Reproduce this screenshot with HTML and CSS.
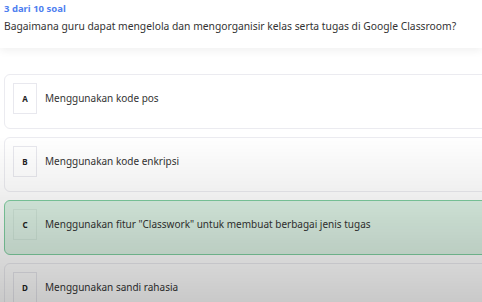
FILE: index.html
```html
<!DOCTYPE html>
<html lang="id">
<head>
  <meta charset="UTF-8">
  <title>Kuis Google Classroom</title>
  <link rel="stylesheet" href="styles.css">
</head>
<body>
  <!-- Question header -->
  <div class="quiz-head">
    <div class="counter">3 dari 10 soal</div>
    <div class="question">Bagaimana guru dapat mengelola dan mengorganisir kelas serta tugas di Google Classroom?</div>
  </div>

  <!-- Answer options -->
  <div class="options">
    <div class="option">
      <span class="letter">A</span>
      <span class="label">Menggunakan kode pos</span>
    </div>
    <div class="option">
      <span class="letter">B</span>
      <span class="label">Menggunakan kode enkripsi</span>
    </div>
    <div class="option selected">
      <span class="letter">C</span>
      <span class="label">Menggunakan fitur "Classwork" untuk membuat berbagai jenis tugas</span>
    </div>
    <div class="option">
      <span class="letter">D</span>
      <span class="label">Menggunakan sandi rahasia</span>
    </div>
  </div>

  <!-- video fade at the bottom -->
  <div class="shade"></div>
</body>
</html>
```

FILE: styles.css
```css
* {
  margin: 0;
  padding: 0;
  box-sizing: border-box;
}

html, body {
  height: 100%;
  overflow: hidden;
}

body {
  display: flex;
  flex-direction: column;
  background: #fff;
  font-family: 'Noto Sans', sans-serif;
  color: #333;
}

/* Header */
.quiz-head {
  height: 48px;
  flex-shrink: 0;
  padding: 2px 4px 0;
  background: #fff;
  box-shadow: 0 3px 8px rgba(0, 0, 0, 0.06);
  position: relative;
  z-index: 1;
}

.counter {
  font-size: 9.5px;
  font-weight: 700;
  color: #4f7ff0;
  line-height: 13px;
}

.question {
  margin-top: 4px;
  font-size: 10.3px;
  line-height: 14px;
  color: #333;
  white-space: nowrap;
}

/* Options */
.options {
  flex: 1;
  min-height: 0;
  overflow: hidden;
  padding: 26px 0 0 4px;
  display: flex;
  flex-direction: column;
  gap: 8px;
}

.option {
  width: calc(100% + 10px);
  height: 55px;
  flex-shrink: 0;
  padding: 8px 8px 14px;
  border: 1px solid #ebebf0;
  border-radius: 6px;
  background: #fff;
  display: flex;
  align-items: flex-start;
  gap: 8px;
}

.option.selected {
  background: #dcf1e4;
  border-color: #7fcea0;
}

.letter {
  width: 24px;
  height: 31px;
  flex-shrink: 0;
  border: 1px solid #e8e8ee;
  background: #fff;
  display: flex;
  align-items: center;
  justify-content: center;
  font-size: 8px;
  font-weight: 700;
  color: #222;
}

.option.selected .letter {
  background: #dcf1e4;
  border-color: #cfe5d8;
}

.label {
  font-size: 10px;
  line-height: 31px;
  color: #333;
  white-space: nowrap;
}

.shade {
  position: fixed;
  inset: 0;
  pointer-events: none;
  z-index: 2;
  background: linear-gradient(to bottom, rgba(0,0,0,0) 45%, rgba(0,0,0,0.06) 63%, rgba(0,0,0,0.21) 100%);
}
```
